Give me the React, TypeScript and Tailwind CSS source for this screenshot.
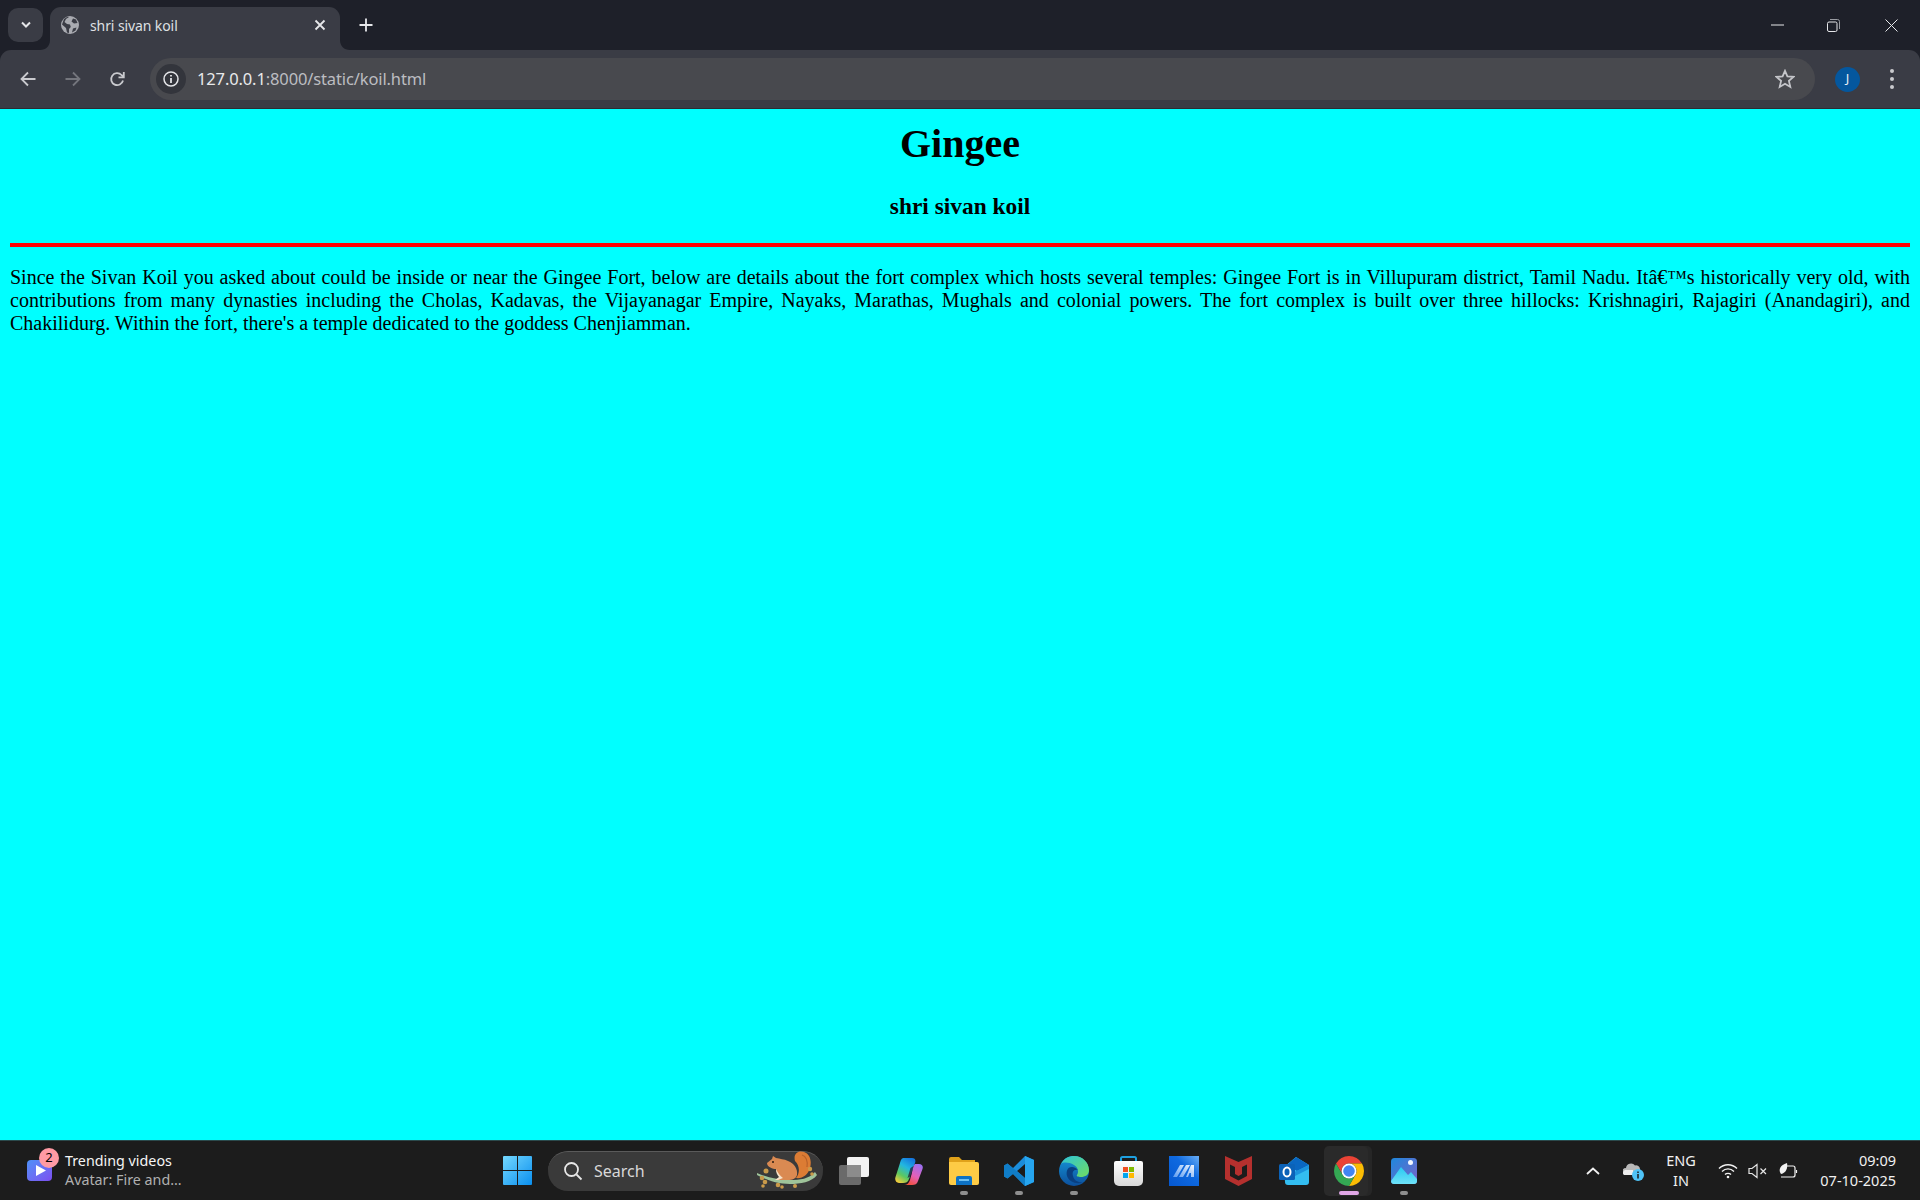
const ui = { fontFamily: '"Noto Sans", "Open Sans", sans-serif' };

function TabFlare({ side }: { side: "left" | "right" }) {
  return (
    <svg
      className={`absolute bottom-0 ${side === "left" ? "-left-[10px]" : "-right-[10px]"}`}
      width="10"
      height="10"
      viewBox="0 0 10 10"
    >
      {side === "left" ? (
        <path d="M10 0C10 6 6 10 0 10H10Z" fill="#3a3c45" />
      ) : (
        <path d="M0 0C0 6 4 10 10 10H0Z" fill="#3a3c45" />
      )}
    </svg>
  );
}

function Globe() {
  return (
    <svg width="18" height="18" viewBox="0 0 18 18">
      <circle cx="9" cy="9" r="9" fill="#a9abb1" />
      <path d="M8 1 5 3 3.500 6 6 8l3 .5.8 2.500-1.800 2v4l-2-.6L5 12 1 8.500 3 3l3-2Z" fill="#3a3c45" />
      <path d="M12 2.500 10.500 5.500 13 7.500l3.500-.5L15 3.500Z" fill="#3a3c45" />
      <path d="M12 12.500l3.500-1-1 3-3.500 2Z" fill="#3a3c45" />
    </svg>
  );
}

function ChromeTop() {
  return (
    <div className="flex h-[50px] items-end bg-[#1e2029] pl-2">
      <div className="mb-2 flex h-[34px] w-[35px] items-center justify-center rounded-[10px] bg-[#3a3c45]">
        <svg width="12" height="8" viewBox="0 0 12 8" fill="none">
          <path d="M2 1.500 6 5.500 10 1.500" stroke="#e4e5e8" strokeWidth="2" />
        </svg>
      </div>
      <div className="relative ml-[7px] flex h-[43px] w-[290px] items-center rounded-t-[11px] bg-[#3a3c45] pb-[7px] pl-[11px] pr-[14px]">
        <TabFlare side="left" />
        <TabFlare side="right" />
        <Globe />
        <span className="ml-[11px] flex-1 text-[14px] tracking-[-0.1px] text-[#dfe0e3]" style={ui}>
          shri sivan koil
        </span>
        <svg width="12" height="12" viewBox="0 0 12 12" stroke="#e6e7ea" strokeWidth="1.800">
          <path d="M1.500 1.500 10.500 10.500M10.500 1.500 1.500 10.500" />
        </svg>
      </div>
      <div className="ml-[19px] flex h-[50px] items-center">
        <svg width="14" height="14" viewBox="0 0 14 14" stroke="#e6e7ea" strokeWidth="1.800">
          <path d="M7 .5V13.500M.5 7H13.500" />
        </svg>
      </div>
      <div className="ml-auto flex h-[50px] items-center pr-[22px]">
        <svg width="13" height="2" viewBox="0 0 13 2" className="mr-[43px]">
          <path d="M0 1H13" stroke="#e6e7ea" strokeWidth="1" />
        </svg>
        <svg width="13" height="13" viewBox="0 0 13 13" fill="none" className="mr-[45px]" stroke="#e6e7ea" strokeWidth="1">
          <rect x=".5" y="3" width="9.500" height="9.500" rx="1.500" />
          <path d="M3 .5H10.500A2 2 0 0 1 12.500 2.500V10" stroke="#9a9ca2" />
        </svg>
        <svg width="13" height="13" viewBox="0 0 13 13" stroke="#e6e7ea" strokeWidth="1">
          <path d="M.5.5 12.500 12.500M12.500.5.5 12.500" />
        </svg>
      </div>
    </div>
  );
}

function Toolbar() {
  return (
    <div className="flex h-[59px] items-start border-b border-[#2b2d33] bg-[#1e2029]">
      <div className="flex h-[58px] w-full items-center rounded-t-[11px] bg-[#3a3c45] pl-5 pr-[26px]">
        <svg width="16" height="16" viewBox="0 0 16 16" fill="none" stroke="#c9cace" strokeWidth="1.800">
          <path d="M15.500 8H1.500M8 1.500 1.500 8 8 14.500" />
        </svg>
        <svg width="16" height="16" viewBox="0 0 16 16" fill="none" stroke="#74767d" strokeWidth="1.800" className="ml-[29px]">
          <path d="M.5 8H14.500M8 1.500 14.500 8 8 14.500" />
        </svg>
        <svg width="16" height="16" viewBox="0 0 16 16" fill="none" stroke="#c9cace" strokeWidth="1.800" className="ml-[28px]">
          <path d="M14 9.500A6 6 0 1 1 12.500 4L14.500 6" />
          <path d="M14.800 1V6.300H9.500" />
        </svg>
        <div className="ml-[25px] flex h-[42px] flex-1 items-center rounded-full bg-[#48494e] pl-[6px] pr-5">
          <div className="flex h-[30px] w-[30px] items-center justify-center rounded-full bg-[#33353c]">
            <svg width="16" height="16" viewBox="0 0 16 16" fill="none">
              <circle cx="8" cy="8" r="7" stroke="#e3e4e7" strokeWidth="1.500" />
              <path d="M8 7V12M8 4V5.600" stroke="#e3e4e7" strokeWidth="1.800" />
            </svg>
          </div>
          <span className="ml-[11px] flex-1 pt-[1px] text-[16.500px] tracking-[-0.13px]" style={ui}>
            <span className="text-[#e8e9eb]">127.0.0.1</span>
            <span className="text-[#bcbdc1]">:8000/static/koil.html</span>
          </span>
          <svg width="20" height="20" viewBox="0 0 20 20" fill="none" stroke="#c4c5c9" strokeWidth="1.800">
            <path d="M10 1.800 12.400 7.400 18.500 7.900 13.900 11.900 15.300 17.900 10 14.700 4.700 17.900 6.100 11.900 1.500 7.900 7.600 7.400Z" />
          </svg>
        </div>
        <div className="ml-5 flex h-[25px] w-[25px] items-center justify-center rounded-full bg-[#04579e] text-[13px] text-[#e8edf3]" style={ui}>
          J
        </div>
        <div className="ml-[30px] flex flex-col gap-[4px]">
          <span className="h-1 w-1 rounded-full bg-[#c9cace]" />
          <span className="h-1 w-1 rounded-full bg-[#c9cace]" />
          <span className="h-1 w-1 rounded-full bg-[#c9cace]" />
        </div>
      </div>
    </div>
  );
}

function WinLogo() {
  return (
    <svg width="29" height="29" viewBox="0 0 29 29">
      <defs>
        <linearGradient id="win" x1="0" y1="0" x2="1" y2="1">
          <stop offset="0" stopColor="#74d8fe" />
          <stop offset="1" stopColor="#0a8fef" />
        </linearGradient>
      </defs>
      <path d="M1 0H14V14H0V1A1 1 0 0 1 1 0ZM15 0H28A1 1 0 0 1 29 1V14H15ZM0 15H14V29H1A1 1 0 0 1 0 28ZM15 15H29V28A1 1 0 0 1 28 29H15Z" fill="url(#win)" />
    </svg>
  );
}

function Squirrel() {
  return (
    <svg width="66" height="40" viewBox="0 0 66 40">
      <path d="M3 22C14 27 26 29 36 29 46 29 55 28 61 21L63 24C58 31 46 33 36 33 24 33 12 29 3 24Z" fill="#9fc49a" />
      <path d="M41 10C39 3 44-1 50 1 56 3 58 10 56 17 54 24 48 28 42 27 46 22 46 15 41 10Z" fill="#dc7c34" />
      <path d="M48 4C52 5 54 10 53 16" fill="none" stroke="#b9622a" strokeWidth="1.200" />
      <path d="M13 12 18 8 19 5 22 7C26 8 30 8 34 10 40 12 44 18 43 24 42 28 38 29 34 29H22L26 26C24 24 22 21 22 18 19 18 13 16 13 12Z" fill="#da8a52" />
      <path d="M22 18C24 22 26 25 29 27L24 29H21L25 26C23 24 22 21 22 18Z" fill="#f6e2c8" />
      <circle cx="19" cy="11" r="1" fill="#2a1a10" />
      <g fill="#c99a4a">
        <circle cx="12" cy="20" r="2.500" />
        <circle cx="8" cy="27" r="2.300" />
        <circle cx="11" cy="31" r="2.300" />
        <circle cx="9" cy="35" r="1.800" />
        <circle cx="24" cy="34" r="2.300" />
        <circle cx="28" cy="36" r="1.800" />
        <circle cx="41" cy="35" r="2" />
        <circle cx="56" cy="18" r="2.200" />
        <circle cx="58" cy="23" r="1.800" />
      </g>
    </svg>
  );
}

function TaskView() {
  return (
    <svg width="30" height="28" viewBox="0 0 30 28">
      <rect x="0" y="8" width="22" height="20" rx="2" fill="#6a6a6a" />
      <rect x="8" y="0" width="22" height="20" rx="2" fill="#f2f2f2" />
      <rect x="8" y="8" width="14" height="12" fill="#8c8c8c" />
    </svg>
  );
}

function Copilot() {
  return (
    <svg width="28" height="28" viewBox="0 0 28 28">
      <defs>
        <linearGradient id="cpA" x1="0.700" y1="0" x2="0.200" y2="1">
          <stop offset="0" stopColor="#1579e0" />
          <stop offset=".35" stopColor="#22b6e0" />
          <stop offset=".7" stopColor="#5cc860" />
          <stop offset="1" stopColor="#f4cc3c" />
        </linearGradient>
        <linearGradient id="cpB" x1="0.800" y1="0" x2="0.300" y2="1">
          <stop offset="0" stopColor="#9a70f2" />
          <stop offset=".55" stopColor="#e560b8" />
          <stop offset="1" stopColor="#f2503a" />
        </linearGradient>
      </defs>
      <path d="M9 1H17C20 1 21 3 20 6L14 22C13 25 11 26 8 26H4C1 26-.5 23 .5 20L5 6C6 2 7 1 9 1Z" fill="url(#cpA)" />
      <path d="M20 7H24C27 7 28.500 9 27.500 12L23 24C22 27 20 28 17 28H9C12 28 14 26 15 23L18 11C18.500 9 19 8 20 7Z" fill="url(#cpB)" />
      <path d="M15.500 11 18.500 9 16 19 12.500 21Z" fill="#241a30" opacity=".75" />
    </svg>
  );
}

function Folder() {
  return (
    <svg width="30" height="28" viewBox="0 0 30 28">
      <path d="M0 2A2 2 0 0 1 2 0H10L13 3H26V8H0Z" fill="#e0a21a" />
      <path d="M0 5H28A2 2 0 0 1 30 7V26A2 2 0 0 1 28 28H2A2 2 0 0 1 0 26Z" fill="#fdcb45" />
      <path d="M7 21A2 2 0 0 1 9 19H21A2 2 0 0 1 23 21V28H7Z" fill="#0d72c4" />
      <rect x="10" y="22" width="10" height="2" fill="#6dc0f2" />
    </svg>
  );
}

function VsCode() {
  return (
    <svg width="30" height="30" viewBox="0 0 30 30">
      <path d="M21 0 30 4V26L21 30 9 18 3.500 22.500 0 20.500V9.500L3.500 7.500 9 12ZM21 8 13 15 21 22Z" fill="#1b8ddb" />
      <path d="M21 0 30 4V26L21 30Z" fill="#26a5ef" />
      <path d="M0 9.500 3.500 7.500 21 22V30L9 18 3.500 22.500 0 20.500Z" fill="#0e78c0" opacity=".75" />
    </svg>
  );
}

function Edge() {
  return (
    <svg width="30" height="30" viewBox="0 0 30 30">
      <defs>
        <linearGradient id="edA" x1="0" y1="0" x2="1" y2="1">
          <stop offset="0" stopColor="#2ec4d8" />
          <stop offset="1" stopColor="#70dc60" />
        </linearGradient>
        <linearGradient id="edB" x1="0" y1="0" x2="0" y2="1">
          <stop offset="0" stopColor="#1596d8" />
          <stop offset="1" stopColor="#0c4f9c" />
        </linearGradient>
      </defs>
      <circle cx="15" cy="15" r="15" fill="url(#edB)" />
      <path d="M2 8C5 2 10 0 15 0 24 0 30 7 30 14 30 19 26 21 22 21 19 21 17 20 18 19 20 16 19 11 15 9 10 6 4 6 2 8Z" fill="url(#edA)" />
      <path d="M13 11C8 11 7 16 8 20 10 26 18 29 24 26 20 27 15 25 14 20 13 17 14 13 19 14 17 12 15 11 13 11Z" fill="#0a3f80" />
    </svg>
  );
}

function Store() {
  return (
    <svg width="29" height="30" viewBox="0 0 29 30">
      <defs>
        <linearGradient id="st" x1="0" y1="0" x2="0" y2="1">
          <stop offset="0" stopColor="#ffffff" />
          <stop offset="1" stopColor="#d8d8d8" />
        </linearGradient>
      </defs>
      <path d="M7 6V2.500A1.500 1.500 0 0 1 8.500 1H20.500A1.500 1.500 0 0 1 22 2.500V6" fill="none" stroke="#1ea0e0" strokeWidth="2" />
      <path d="M0 7A2 2 0 0 1 2 5H27A2 2 0 0 1 29 7V25A5 5 0 0 1 24 30H5A5 5 0 0 1 0 25Z" fill="url(#st)" />
      <rect x="9" y="11" width="5" height="5" fill="#f05022" />
      <rect x="15" y="11" width="5" height="5" fill="#80ba01" />
      <rect x="9" y="17" width="5" height="5" fill="#02a4ef" />
      <rect x="15" y="17" width="5" height="5" fill="#ffb902" />
    </svg>
  );
}

function MaLogo() {
  return (
    <svg width="30" height="30" viewBox="0 0 30 30">
      <defs>
        <linearGradient id="ma" x1="0" y1="1" x2="1" y2="0">
          <stop offset="0" stopColor="#0558d0" />
          <stop offset=".6" stopColor="#0f6ae0" />
          <stop offset="1" stopColor="#69aef5" />
        </linearGradient>
        <linearGradient id="maB" x1="0" y1="1" x2="1" y2="0">
          <stop offset="0" stopColor="#5d9cf0" />
          <stop offset="1" stopColor="#eef5fe" />
        </linearGradient>
      </defs>
      <rect width="30" height="30" fill="url(#ma)" />
      <path d="M4 21 11 9H15L8 21ZM10 21 17 9H21L14 21ZM17 21 22 9H25V21H22V17H20.500L19 21Z" fill="url(#maB)" />
    </svg>
  );
}

function McAfee() {
  return (
    <svg width="27" height="30" viewBox="0 0 27 30">
      <path d="M0 0 13.500 6 27 0V23L13.500 30 0 23ZM5 8.500V20L13.500 24.500 22 20V8.500L17 11V18L13.500 20 10 18V11Z" fill="#b5302e" fillRule="evenodd" />
    </svg>
  );
}

function Outlook() {
  return (
    <svg width="30" height="28" viewBox="0 0 30 28">
      <path d="M5 10 17 0 30 8V25A3 3 0 0 1 27 28H9A3 3 0 0 1 6 25Z" fill="#33bdf0" />
      <path d="M17 0 30 8 18 14 8 8Z" fill="#0a67c2" />
      <path d="M9 18 30 8V12L12 21Z" fill="#1b93dd" />
      <rect x="0" y="7" width="16" height="16" rx="1.500" fill="#0b62b8" />
      <ellipse cx="8" cy="15" rx="3.500" ry="4.500" fill="none" stroke="#fff" strokeWidth="2" />
    </svg>
  );
}

function Chrome() {
  const seg = "M4.950 13A22 22 0 0 1 43.050 13H24A11 11 0 0 0 14.470 29.500Z";
  return (
    <svg width="30" height="30" viewBox="2 2 44 44">
      <path d={seg} fill="#ea4335" />
      <path d={seg} fill="#fbbc04" transform="rotate(120 24 24)" />
      <path d={seg} fill="#34a853" transform="rotate(240 24 24)" />
      <circle cx="24" cy="24" r="11" fill="#fff" />
      <circle cx="24" cy="24" r="8.500" fill="#4285f4" />
    </svg>
  );
}

function Photos() {
  return (
    <svg width="26" height="26" viewBox="0 0 26 26">
      <defs>
        <linearGradient id="phA" x1="0" y1="0" x2="1" y2="1">
          <stop offset="0" stopColor="#1e88dc" />
          <stop offset="1" stopColor="#7a62c8" />
        </linearGradient>
        <linearGradient id="phB" x1="0" y1="0" x2="0" y2="1">
          <stop offset="0" stopColor="#28c8f2" />
          <stop offset="1" stopColor="#6ee2f8" />
        </linearGradient>
      </defs>
      <rect width="26" height="26" rx="3.500" fill="url(#phA)" />
      <path d="M0 23 10 9 17 17 20 14 26 21V23A3 3 0 0 1 23 26H3A3 3 0 0 1 0 23Z" fill="url(#phB)" />
      <circle cx="19.500" cy="4.500" r="2.500" fill="#f2f6ff" />
    </svg>
  );
}

function Dock({ children, width, dot }: { children: React.ReactNode; width: number; dot?: boolean }) {
  return (
    <div className="relative flex h-[60px] items-center justify-center" style={{ width }}>
      {children}
      {dot && <span className="absolute bottom-[6px] h-[4px] w-[8px] rounded-full bg-[#8f8f8f]" />}
    </div>
  );
}

function Tray() {
  return (
    <div className="ml-auto flex h-[60px] items-center pr-[24px] text-white" style={ui}>
      <svg width="14" height="8" viewBox="0 0 14 8" fill="none" stroke="#f2f2f2" strokeWidth="1.800">
        <path d="M1 7 7 1.500 13 7" />
      </svg>
      <svg width="21" height="20" viewBox="0 0 21 20" className="ml-[23px]">
        <path d="M3 14A3.500 3.500 0 0 1 3 7 5 5 0 0 1 12 4.500 4 4 0 0 1 17 8V14Z" fill="#b8b8b8" />
        <path d="M1 14A3 3 0 0 1 4 9H10V14Z" fill="#eeeeee" />
        <circle cx="15" cy="14" r="6" fill="#4fc3f7" />
        <path d="M15 13V17.500M15 10.500V12" stroke="#1c1c1c" strokeWidth="1.500" />
      </svg>
      <div className="-mt-[2px] ml-[21px] flex w-[32px] flex-col items-center text-[14.500px] leading-[20px] text-[#f0f0f0]">
        <span>ENG</span>
        <span>IN</span>
      </div>
      <svg width="20" height="16" viewBox="0 0 20 16" fill="none" stroke="#f2f2f2" strokeWidth="1.400" className="ml-[21px]">
        <path d="M1 5.500C6 .5 14 .5 19 5.500M4 8.500C7.500 5 12.500 5 16 8.500M7 11.500C8.500 10 11.500 10 13 11.500" />
        <circle cx="10" cy="14" r="1.300" fill="#f2f2f2" stroke="none" />
      </svg>
      <svg width="19" height="16" viewBox="0 0 19 16" fill="none" stroke="#e6e6e6" strokeWidth="1.200" className="ml-[10px]">
        <path d="M1 5.500H4L9 1.500V14.500L4 10.500H1Z" />
        <path d="M12.500 5.500 18 11M18 5.500 12.500 11" />
      </svg>
      <svg width="20" height="18" viewBox="0 0 20 18" fill="none" stroke="#f2f2f2" strokeWidth="1.200" className="ml-[11px]">
        <path d="M6 4H15A2 2 0 0 1 17 6V13A2 2 0 0 1 15 15H3" />
        <path d="M18.500 8V11" />
        <path d="M3 12C0 8 2 3 9 1 10 6 8 11 3 12Z" fill="#f2f2f2" stroke="none" />
      </svg>
      <div className="-mt-[2px] ml-[21px] flex w-[77px] flex-col items-end text-[14.500px] leading-[20px] text-[#f0f0f0]">
        <span>09:09</span>
        <span className="whitespace-nowrap">07-10-2025</span>
      </div>
    </div>
  );
}

function Taskbar() {
  return (
    <div className="flex h-[60px] items-center border-t border-[#2b4a4c] bg-[#1c1c1c]">
      <div className="flex w-[503px] items-center pl-[27px]">
        <div className="relative h-[21px] w-[25px] rounded-[4px] bg-gradient-to-br from-[#4a90f8] to-[#7a4df0]">
          <svg width="10" height="11" viewBox="0 0 10 11" className="absolute left-[9px] top-[5px]">
            <path d="M0 0 10 5.500 0 11Z" fill="#fff" />
          </svg>
          <span
            className="absolute -right-[7px] -top-[12px] flex h-5 w-5 items-center justify-center rounded-full bg-[#ff9aa4] text-[13px] text-black"
            style={ui}
          >
            2
          </span>
        </div>
        <div className="-mt-[2px] ml-[13px] flex flex-col text-[14.300px] leading-[19px]" style={ui}>
          <span className="text-[#f5f5f5]">Trending videos</span>
          <span className="text-[#b0b0b0]">Avatar: Fire and...</span>
        </div>
      </div>
      <WinLogo />
      <div className="ml-4 flex h-10 w-[275px] items-center rounded-full border-t border-[#5a5a5a] bg-[#3a3a3a] pl-[15px] pr-[3px]">
        <svg width="20" height="20" viewBox="0 0 20 20" fill="none" stroke="#e8e8e8" strokeWidth="1.800">
          <circle cx="8.500" cy="8.500" r="6.500" />
          <path d="M13.500 13.500 18.500 18.500" />
        </svg>
        <span className="ml-[11px] flex-1 text-[16px] text-[#d8d8d8]" style={ui}>
          Search
        </span>
        <Squirrel />
      </div>
      <div className="ml-[3px] flex items-center">
        <Dock width={55}><TaskView /></Dock>
        <Dock width={55}><Copilot /></Dock>
        <Dock width={55} dot><Folder /></Dock>
        <Dock width={55} dot><VsCode /></Dock>
        <Dock width={55} dot><Edge /></Dock>
        <Dock width={55}><Store /></Dock>
        <Dock width={55}><MaLogo /></Dock>
        <Dock width={55}><McAfee /></Dock>
        <Dock width={55}><Outlook /></Dock>
        <div className="relative ml-[3px] flex h-[50px] w-[44px] items-center rounded-[5px] bg-[#2a2a2a] pl-[10px] shadow-[4px_0_0_#262626]">
          <Chrome />
          <span className="absolute bottom-[1px] left-[15px] h-[4px] w-[20px] rounded-full bg-[#e0a6e6]" />
        </div>
        <Dock width={72} dot><Photos /></Dock>
      </div>
      <Tray />
    </div>
  );
}

export default function App() {
  return (
    <div className="flex h-screen flex-col overflow-hidden">
      <ChromeTop />
      <Toolbar />
      <main
        className="flex-1 bg-[#00ffff] px-[10px] pt-[12px] text-black"
        style={{ fontFamily: '"Liberation Serif", "Times New Roman", serif' }}
      >
        <h1 className="text-center text-[40px] font-bold leading-[46px]">Gingee</h1>
        <h3 className="mt-[26px] text-center text-[23.400px] font-bold leading-[27px]">shri sivan koil</h3>
        <hr className="mt-[23px] h-[4px] border-0 bg-[#ff0000]" />
        <p className="mt-[19px] text-justify text-[20px] leading-[23px]">
          Since the Sivan Koil you asked about could be inside or near the Gingee Fort, below are details about the fort complex which hosts several temples: Gingee Fort is in Villupuram district, Tamil Nadu. Itâ€™s historically very old, with contributions from many dynasties including the Cholas, Kadavas, the Vijayanagar Empire, Nayaks, Marathas, Mughals and colonial powers. The fort complex is built over three hillocks: Krishnagiri, Rajagiri (Anandagiri), and Chakilidurg. Within the fort, there's a temple dedicated to the goddess Chenjiamman.
        </p>
      </main>
      <Taskbar />
    </div>
  );
}
